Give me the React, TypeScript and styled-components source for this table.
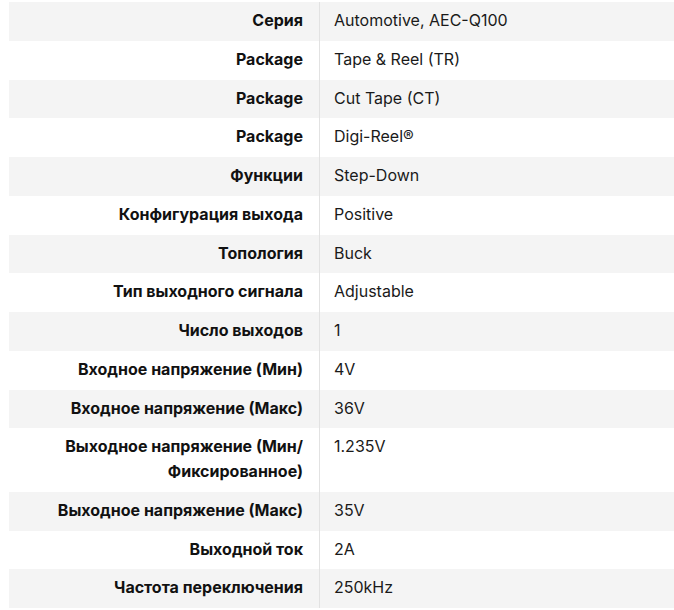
import React from "react";
import styled, { createGlobalStyle } from "styled-components";

const GlobalStyle = createGlobalStyle`
  html, body {
    margin: 0;
    padding: 0;
    background: #ffffff;
    overflow: hidden;
  }
  body {
    font-family: "Inter", "Noto Sans", sans-serif;
    font-size: 16px;
    color: #1a1a1a;
  }
`;

const Page = styled.div`
  padding: 2px 0 0 9px;
`;

const SpecTable = styled.div`
  display: flex;
  flex-direction: column;
`;

const SpecRow = styled.div<{ $striped: boolean }>`
  display: flex;
  align-items: stretch;
  background: ${(p) => (p.$striped ? "#f4f4f4" : "#ffffff")};
`;

const Label = styled.div`
  box-sizing: border-box;
  flex: 0 0 311px;
  padding: 6px 16px 8px 16px;
  border-right: 1px solid #e2e2e2;
  text-align: right;
  font-weight: 700;
  line-height: 24.75px;
  color: #111111;
`;

const Value = styled.div`
  flex: 1;
  padding: 6px 14px 8px 14px;
  line-height: 24.75px;
  font-weight: 400;
  color: #1a1a1a;
`;

const specs: [string, string][] = [
  ["Серия", "Automotive, AEC-Q100"],
  ["Package", "Tape & Reel (TR)"],
  ["Package", "Cut Tape (CT)"],
  ["Package", "Digi-Reel®"],
  ["Функции", "Step-Down"],
  ["Конфигурация выхода", "Positive"],
  ["Топология", "Buck"],
  ["Тип выходного сигнала", "Adjustable"],
  ["Число выходов", "1"],
  ["Входное напряжение (Мин)", "4V"],
  ["Входное напряжение (Макс)", "36V"],
  ["Выходное напряжение (Мин/ Фиксированное)", "1.235V"],
  ["Выходное напряжение (Макс)", "35V"],
  ["Выходной ток", "2A"],
  ["Частота переключения", "250kHz"],
];

export default function App() {
  return (
    <Page>
      <GlobalStyle />
      <SpecTable>
        {specs.map(([label, value], i) => (
          <SpecRow key={i} $striped={i % 2 === 0}>
            <Label>{label}</Label>
            <Value>{value}</Value>
          </SpecRow>
        ))}
      </SpecTable>
    </Page>
  );
}
